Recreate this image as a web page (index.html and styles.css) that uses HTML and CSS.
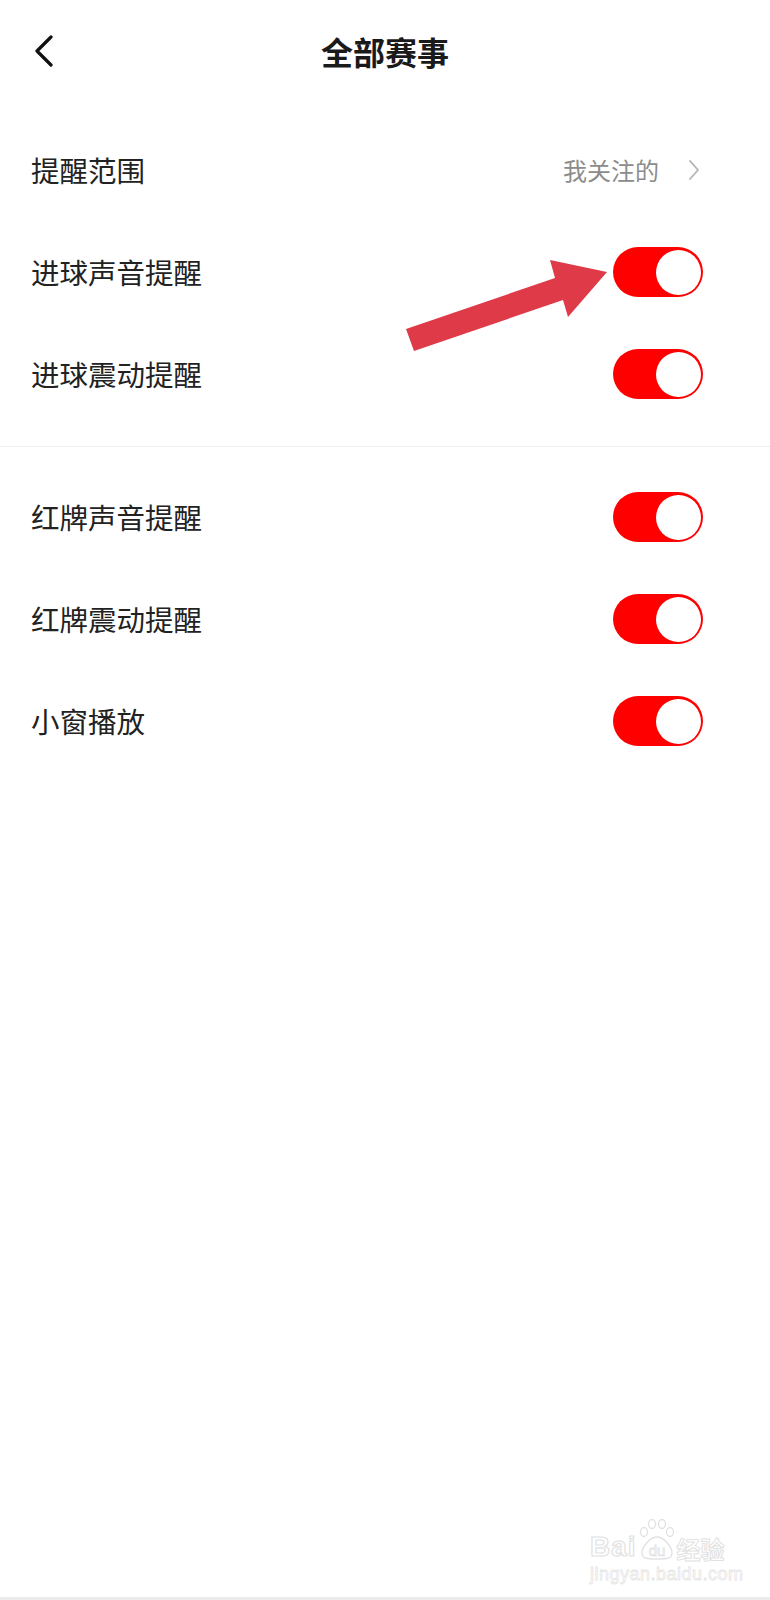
FILE: index.html
```html
<!DOCTYPE html>
<html lang="zh-CN">
<head>
  <meta charset="UTF-8" />
  <meta name="viewport" content="width=device-width, initial-scale=1.0"/>
  <title>全部赛事</title>
  <link rel="stylesheet" href="styles.css">
</head>
<body>
  <div class="page">
    <header class="topbar">
      <button class="btn-back" aria-label="返回">
        <svg width="22" height="32" viewBox="0 0 22 32">
          <polyline points="18,2 4,16 18,30" fill="none" stroke="#111" stroke-width="3.2" stroke-linecap="round" stroke-linejoin="round"/>
        </svg>
      </button>
      <h1>全部赛事</h1>
      <span class="spacer"></span>
    </header>

    <section class="group group-first">
      <div class="row">
        <span class="label">提醒范围</span>
        <span class="value">
          我关注的
          <svg class="chev" width="12" height="20" viewBox="0 0 12 20">
            <polyline points="2,1 10,10 2,19" fill="none" stroke="#b3b3b3" stroke-width="1.8" stroke-linecap="round" stroke-linejoin="round"/>
          </svg>
        </span>
      </div>
      <div class="row">
        <span class="label">进球声音提醒</span>
        <span class="switch on"><span class="knob"></span></span>
      </div>
      <div class="row">
        <span class="label">进球震动提醒</span>
        <span class="switch on"><span class="knob"></span></span>
      </div>
    </section>

    <div class="divider"></div>

    <section class="group">
      <div class="row">
        <span class="label">红牌声音提醒</span>
        <span class="switch on"><span class="knob"></span></span>
      </div>
      <div class="row">
        <span class="label">红牌震动提醒</span>
        <span class="switch on"><span class="knob"></span></span>
      </div>
      <div class="row">
        <span class="label">小窗播放</span>
        <span class="switch on"><span class="knob"></span></span>
      </div>
    </section>

    <div class="filler"></div>
    <div class="footer-line"></div>

    <!-- annotation arrow drawn over the list -->
    <svg class="annot-arrow" width="215" height="100" viewBox="0 0 215 100">
      <polygon points="6,74 155,23 150,5 207,17 168,62 163,45 14,96" fill="#df3a47"/>
    </svg>

    <div class="watermark">
      <div class="wm-logo">
        <span class="wm-bai">Bai</span>
        <svg class="wm-paw" width="38" height="42" viewBox="0 0 38 42">
          <g fill="none" stroke="#e2e2e2" stroke-width="1.4">
            <ellipse cx="6" cy="13" rx="3.5" ry="4.5"/>
            <ellipse cx="14" cy="5" rx="3.5" ry="4.5"/>
            <ellipse cx="24" cy="5" rx="3.5" ry="4.5"/>
            <ellipse cx="32" cy="13" rx="3.5" ry="4.5"/>
            <path d="M19 18 C12 18 4 28 4 34 C4 40 10 40 19 40 C28 40 34 40 34 34 C34 28 26 18 19 18 Z"/>
          </g>
          <text x="19" y="37" text-anchor="middle" class="wm-du">du</text>
        </svg>
        <span class="wm-jy">经验</span>
      </div>
      <div class="wm-url">jingyan.baidu.com</div>
    </div>
  </div>
</body>
</html>
```

FILE: styles.css
```css
body {
  margin: 0;
  background-color: #fff;
  font-family: "Noto Sans CJK SC", "Noto Sans", sans-serif;
  color: #222;
}

.page {
  position: relative;
  width: 770px;
  min-height: 1600px;
  display: flex;
  flex-direction: column;
}

.topbar {
  height: 102px;
  display: grid;
  grid-template-columns: 120px 1fr 120px;
  align-items: center;
}

.btn-back {
  background: none;
  border: none;
  padding: 0 0 0 33px;
  display: flex;
  align-items: center;
  cursor: pointer;
}

.topbar h1 {
  margin: 0;
  text-align: center;
  font-size: 32px;
  font-weight: 700;
  color: #1a1a1a;
  line-height: 1;
}

.group {
  padding: 19px 0 20px;
}

.group-first {
  padding: 17px 0 21px;
}

.row {
  height: 102px;
  display: flex;
  align-items: center;
  justify-content: space-between;
  padding: 0 67px 0 31px;
}

.label {
  font-size: 28.5px;
  line-height: 1;
}

.value {
  display: flex;
  align-items: center;
  gap: 29px;
  font-size: 24px;
  color: #8c8c8c;
  line-height: 1;
  margin-left: -3px;
}

.chev {
  margin-right: 3px;
}

.switch {
  width: 90px;
  height: 50px;
  border-radius: 25px;
  background-color: #fe0000;
  display: flex;
  align-items: center;
  padding: 0 2px;
  box-sizing: border-box;
}

.switch.on {
  justify-content: flex-end;
}

.knob {
  width: 45px;
  height: 45px;
  border-radius: 50%;
  background-color: #fff;
}

.divider {
  height: 1px;
  background-color: #eeeeee;
}

.filler {
  flex: 1;
}

.footer-line {
  height: 3px;
  background-color: #ececec;
}

.annot-arrow {
  position: absolute;
  left: 400px;
  top: 255px;
}

.watermark {
  position: absolute;
  left: 590px;
  top: 1519px;
  font-family: "Liberation Sans", sans-serif;
  color: transparent;
}

.wm-logo {
  display: flex;
  align-items: flex-end;
  height: 42px;
}

.wm-bai {
  font-size: 28px;
  font-weight: 700;
  -webkit-text-stroke: 1.2px #e2e2e2;
  line-height: 1;
  letter-spacing: 1px;
}

.wm-paw {
  margin: 0 1px;
}

.wm-du {
  font-family: "Liberation Sans", sans-serif;
  font-size: 15px;
  fill: none;
  stroke: #e2e2e2;
  stroke-width: 0.8;
}

.wm-jy {
  font-family: "Noto Sans CJK SC", sans-serif;
  font-size: 24px;
  font-weight: 700;
  -webkit-text-stroke: 1px #e2e2e2;
  line-height: 1;
}

.wm-url {
  margin-top: 4px;
  font-size: 18px;
  -webkit-text-stroke: 0.8px #e6e6e6;
  letter-spacing: 0.5px;
  line-height: 1;
}
```
